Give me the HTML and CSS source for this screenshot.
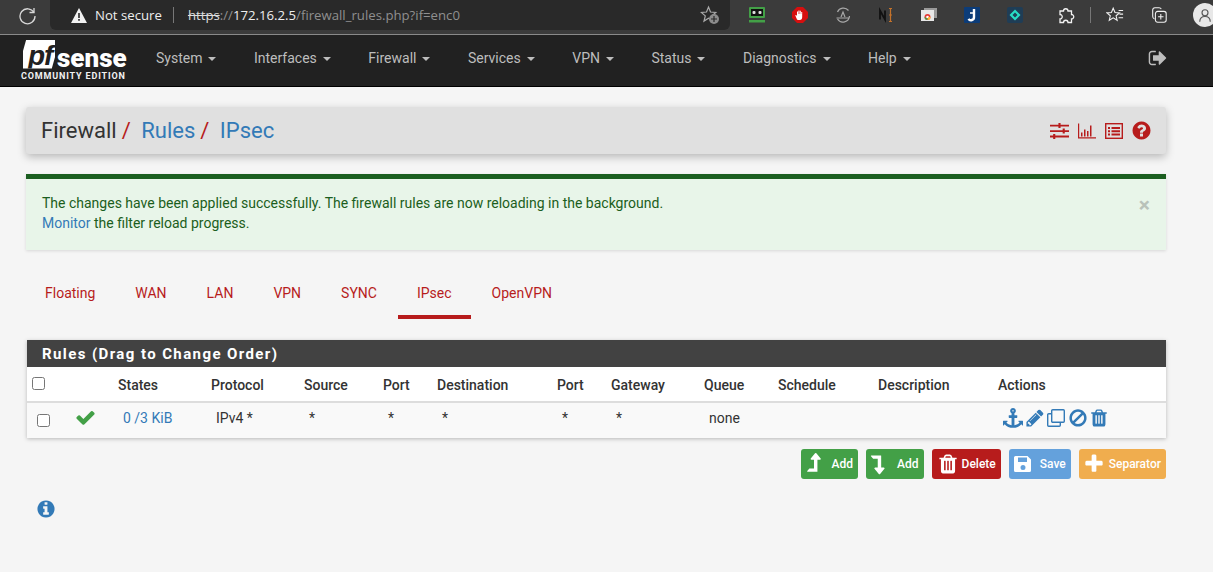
FILE: index.html
```html
<!DOCTYPE html>
<html lang="en">
<head>
    <meta charset="UTF-8">
    <meta name="viewport" content="width=device-width, initial-scale=1.0">
    <title>Firewall: Rules: IPsec</title>
    <link rel="stylesheet" href="styles.css">
</head>
<body>
    <svg class="icon-defs" xmlns="http://www.w3.org/2000/svg">
        <symbol id="i-signout" viewBox="0 0 1792 1792"><path d="M704 1440q0 4 1 20t.5 26.5-3 23.5-10 19.5-20.5 6.5h-320q-119 0-203.5-84.5t-84.5-203.5v-704q0-119 84.5-203.5t203.5-84.5h320q13 0 22.5 9.5t9.5 22.5q0 4 1 20t.5 26.5-3 23.5-10 19.5-20.5 6.5h-320q-66 0-113 47t-47 113v704q0 66 47 113t113 47h312l11.5 1 11.5 3 8 5.5 7 9 2 13.5zm928-544q0 26-19 45l-544 544q-19 19-45 19t-45-19-19-45v-288h-448q-26 0-45-19t-19-45v-384q0-26 19-45t45-19h448v-288q0-26 19-45t45-19 45 19l544 544q19 19 19 45z"/></symbol>
        <symbol id="i-question" viewBox="0 0 1792 1792"><path d="M1024 1376v-192q0-14-9-23t-23-9h-192q-14 0-23 9t-9 23v192q0 14 9 23t23 9h192q14 0 23-9t9-23zm256-672q0-88-55.5-163t-138.5-116-170-41q-243 0-371 213-15 24 8 42l132 100q7 6 19 6 16 0 25-12 53-68 86-92 34-24 86-24 48 0 85.5 26t37.5 59q0 38-20 61t-68 45q-63 28-115.5 86.5t-52.5 125.5v36q0 14 9 23t23 9h192q14 0 23-9t9-23q0-19 21.5-49.5t54.5-49.5q32-18 49-28.5t46-35 44.5-48 28-60.5 12.5-81zm384 192q0 209-103 385.5t-279.5 279.5-385.5 103-385.5-103-279.5-279.5-103-385.5 103-385.5 279.5-279.5 385.5-103 385.5 103 279.5 279.5 103 385.5z"/></symbol>
        <symbol id="i-info" viewBox="0 0 1792 1792"><path d="M1152 1376v-160q0-14-9-23t-23-9h-96v-512q0-14-9-23t-23-9h-320q-14 0-23 9t-9 23v160q0 14 9 23t23 9h96v320h-96q-14 0-23 9t-9 23v160q0 14 9 23t23 9h448q14 0 23-9t9-23zm-128-896v-160q0-14-9-23t-23-9h-192q-14 0-23 9t-9 23v160q0 14 9 23t23 9h192q14 0 23-9t9-23zm640 416q0 209-103 385.5t-279.5 279.5-385.5 103-385.5-103-279.5-279.5-103-385.5 103-385.5 279.5-279.5 385.5-103 385.5 103 279.5 279.5 103 385.5z"/></symbol>
        <symbol id="i-check" viewBox="0 0 1792 1792"><path d="M1671 566q0 40-28 68l-724 724-136 136q-28 28-68 28t-68-28l-136-136-362-362q-28-28-28-68t28-68l136-136q28-28 68-28t68 28l294 295 656-657q28-28 68-28t68 28l136 136q28 28 28 68z"/></symbol>
        <symbol id="i-anchor" viewBox="0 0 1792 1792"><path d="M960 256q0-26-19-45t-45-19-45 19-19 45 19 45 45 19 45-19 19-45zm832 928v352q0 22-20 30-8 2-12 2-12 0-23-9l-93-93q-119 143-318.5 226.5t-429.5 83.5-429.5-83.5-318.5-226.5l-93 93q-9 9-23 9-4 0-12-2-20-8-20-30v-352q0-14 9-23t23-9h352q22 0 30 20 8 19-7 35l-100 100q67 91 189.5 153.5t271.5 82.5v-647h-192q-26 0-45-19t-19-45v-128q0-26 19-45t45-19h192v-163q-58-34-93-92.5t-35-128.5q0-106 75-181t181-75 181 75 75 181q0 70-35 128.5t-93 92.5v163h192q26 0 45 19t19 45v128q0 26-19 45t-45 19h-192v647q149-20 271.5-82.5t189.5-153.5l-100-100q-15-16-7-35 8-20 30-20h352q14 0 23 9t9 23z"/></symbol>
        <symbol id="i-pencil" viewBox="0 0 1792 1792"><path d="M491 1536l91-91-235-235-91 91v107h128v128h107zm523-928q0-22-22-22-10 0-17 7l-542 542q-7 7-7 17 0 22 22 22 10 0 17-7l542-542q7-7 7-17zm-54-192l416 416-832 832h-416v-416zm683 96q0 53-37 90l-166 166-416-416 166-165q36-38 90-38 53 0 91 38l235 234q37 39 37 91z"/></symbol>
        <symbol id="i-ban" viewBox="0 0 1792 1792"><path d="M1440 893q0-161-87-295l-754 753q137 89 297 89 111 0 211.5-43.5t173.5-116.5 116-174.5 43-212.5zm-999 299l755-754q-135-91-300-91-148 0-273 73t-198 199-73 274q0 162 89 299zm1223-299q0 157-61 300t-163.5 246-245 164-298.5 61-298.5-61-245-164-163.5-246-61-300 61-299.5 163.5-245.5 245-164 298.5-61 298.5 61 245 164 163.5 245.5 61 299.5z"/></symbol>
        <symbol id="i-trash" viewBox="0 0 1792 1792"><path d="M704 1376v-704q0-14-9-23t-23-9h-64q-14 0-23 9t-9 23v704q0 14 9 23t23 9h64q14 0 23-9t9-23zm256 0v-704q0-14-9-23t-23-9h-64q-14 0-23 9t-9 23v704q0 14 9 23t23 9h64q14 0 23-9t9-23zm256 0v-704q0-14-9-23t-23-9h-64q-14 0-23 9t-9 23v704q0 14 9 23t23 9h64q14 0 23-9t9-23zm-544-992h448l-48-117q-7-9-17-11h-317q-10 2-17 11zm928 32v64q0 14-9 23t-23 9h-96v948q0 83-47 143.5t-113 60.5h-832q-66 0-113-58.5t-47-141.5v-952h-96q-14 0-23-9t-9-23v-64q0-14 9-23t23-9h309l70-167q15-37 54-63t79-26h320q40 0 79 26t54 63l70 167h309q14 0 23 9t9 23z"/></symbol>
        <symbol id="i-plus" viewBox="0 0 1792 1792"><path d="M1600 736v192q0 40-28 68t-68 28h-416v416q0 40-28 68t-68 28h-192q-40 0-68-28t-28-68v-416h-416q-40 0-68-28t-28-68v-192q0-40 28-68t68-28h416v-416q0-40 28-68t68-28h192q40 0 68 28t28 68v416h416q40 0 68 28t28 68z"/></symbol>
        <symbol id="i-up" viewBox="0 0 1792 1792"><path d="M1402 548q-18 36-58 36h-192v864q0 14-9 23t-23 9h-704q-21 0-29-18-8-20 4-35l160-192q9-11 25-11h320v-640h-192q-40 0-58-37-17-37 9-68l320-384q18-22 49-22t49 22l320 384q27 32 9 69z"/></symbol>
        <symbol id="i-down" viewBox="0 0 1792 1792"><path d="M322 256h704q13 0 22.5 9.5t9.5 23.5v863h192q40 0 58 37t-9 69l-320 384q-18 22-49 22t-49-22l-320-384q-26-31-9-69 18-37 58-37h192v-640h-320q-14 0-25-11l-160-192q-13-14-4-34 9-19 29-19z"/></symbol>
        <symbol id="i-save" viewBox="0 0 18 18"><path fill-rule="evenodd" d="M1.500 1h12l3.500 3.500v11a1.500 1.500 0 0 1-1.500 1.500h-14a1.500 1.500 0 0 1-1.500-1.500v-13a1.500 1.500 0 0 1 1.500-1.500zM4 2.500v4.500h9v-4.500zM9 10a2.500 2.500 0 1 0 0 5 2.500 2.500 0 0 0 0-5z"/></symbol>
    </svg>

    <!-- barra do navegador -->
    <div class="chrome">
        <svg class="reload" viewBox="0 0 20 20" fill="none" stroke="#d8d8d8" stroke-width="1.300"><path d="M16 3v4.500h-4.500"/><path d="M16 7.500a7.500 7.500 0 1 0 1 3.500"/></svg>
        <div class="omnibox">
            <svg class="warn" viewBox="0 0 16 15"><path fill="#f2f2f2" d="M8 0l8 15H0z"/><path fill="#292929" d="M7.200 5h1.600v5H7.200zM7.200 11h1.600v1.800H7.200z"/></svg>
            <span class="not-secure">Not secure</span>
            <span class="omni-sep"></span>
            <span class="url"><s>https</s><span class="dim">://</span>172.16.2.5<span class="dim">/firewall_rules.php?if=enc0</span></span>
            <svg class="fav-add" viewBox="0 0 20 20"><path fill="none" stroke="#aaa" stroke-width="1.200" d="M8.500 2l2 5 5.300.4-4 3.500 1.200 5.200-4.500-2.800-4.500 2.800 1.300-5.200-4-3.500 5.200-.4z"/><circle cx="14" cy="14" r="5" fill="#8c8c8c"/><path stroke="#292929" stroke-width="1.200" d="M14 11v6M11 14h6"/></svg>
        </div>
        <div class="extensions">
            <svg viewBox="0 0 16 16"><rect y="0" width="16" height="11" rx="1" fill="#43a047"/><rect x="2" y="2" width="12" height="7" fill="#111"/><rect x="3.500" y="4" width="3" height="3" rx="1" fill="#ddd"/><rect x="9.500" y="4" width="3" height="3" rx="1" fill="#ddd"/><rect y="13" width="16" height="2.500" fill="#43a047"/></svg>
            <svg viewBox="0 0 16 16"><path fill="#d60f0f" d="M5 0h6l5 5v6l-5 5H5l-5-5V5z"/><path fill="#fff" d="M5 12.500L3.200 8.300l1 -.4L5 9V4.500h1V7h.4V3.500h1V7h.4V3.800h1V7h.4V5h1v5q0 3-2.500 3H7q-1.300 0-2-.5z"/></svg>
            <svg viewBox="0 0 16 16" fill="none" stroke="#a8a8a8" stroke-width="1.200"><path d="M2.500 5a6.500 6.500 0 0 1 11-1.500M14.500 9a6.500 6.500 0 0 1-12 3M1.500 11h13"/><path d="M6 10l2-5 2 5"/></svg>
            <svg viewBox="0 0 16 16" fill="none"><path stroke="#111" stroke-width="1.800" d="M2 12.500V3.500l5 9V3.500"/><path stroke="#c4722a" stroke-width="1.200" d="M11 1.500h3M12.500 1.500v13M11 14.500h3M11 8h3"/></svg>
            <svg viewBox="0 0 16 16"><rect x="3" y="1" width="13" height="10" fill="#9a9a9a"/><rect x="0" y="3" width="13" height="11" fill="#e8e8e8"/><circle cx="6.500" cy="10" r="3" fill="#e53935"/><circle cx="6.500" cy="10" r="1.300" fill="#fff"/><path d="M3.500 10a3 3 0 0 0 3 3v-1.500z" fill="#43a047"/><path d="M6.500 13a3 3 0 0 0 3-3H7.500z" fill="#fbc02d"/></svg>
            <svg viewBox="0 0 16 16"><rect width="16" height="16" rx="1" fill="#0c3c78"/><path fill="none" stroke="#fff" stroke-width="2.400" d="M10 2v8a3 3 0 0 1-5.500 1.800"/><path stroke="#fff" stroke-width="1.500" d="M6 6h4"/></svg>
            <svg viewBox="0 0 16 16"><rect width="16" height="16" rx="2" fill="#1f3d56"/><path fill="#27dcc4" fill-rule="evenodd" d="M8 2.500L13.500 8 8 13.500 2.500 8zM8 5.500L5.500 8 8 10.500 10.500 8z"/></svg>
        </div>
        <svg class="puzzle" viewBox="0 0 18 18"><path fill="none" stroke="#f2f2f2" stroke-width="1.300" d="M3 5h3.500a2.200 2.200 0 1 1 4.500 0h3.500v3.500a2.200 2.200 0 1 1 0 4.500V16.500H11a2.200 2.200 0 1 0-4.500 0H3V13a2.200 2.200 0 1 0 0-4.500z"/></svg>
        <span class="tool-sep"></span>
        <svg class="favs" viewBox="0 0 20 20" fill="none" stroke="#f2f2f2" stroke-width="1.200"><path d="M8 2.500l2 4.700 5 .4-3.800 3.300 1.200 5-4.400-2.700-4.400 2.700 1.200-5L1 7.600l5-.4z"/><path d="M14 5h5M15 9h4M14 13h5"/></svg>
        <svg class="collections" viewBox="0 0 20 20" fill="none" stroke="#f2f2f2" stroke-width="1.200"><path d="M5 14.500q-2 -.5-2-3V4.500q0-2.500 2.500-2.500H10q2 0 2.500 1.500"/><rect x="6" y="6" width="12" height="12" rx="2.500"/><path d="M12 9v6M9 12h6"/></svg>
        <span class="avatar"><svg viewBox="0 0 24 24" fill="none" stroke="#555" stroke-width="1.500"><circle cx="12" cy="9" r="4"/><path d="M5 21c0-6 3-7 7-7s7 1 7 7"/></svg></span>
    </div>

    <!-- menu principal -->
    <nav class="navbar">
        <a class="brand">
            <span class="brand-top"><span class="brand-pf">pf</span><span class="brand-sense">sense</span></span>
            <span class="brand-edition">COMMUNITY EDITION</span>
        </a>
        <ul class="menu">
            <li>System<i class="caret"></i></li>
            <li>Interfaces<i class="caret"></i></li>
            <li>Firewall<i class="caret"></i></li>
            <li>Services<i class="caret"></i></li>
            <li>VPN<i class="caret"></i></li>
            <li>Status<i class="caret"></i></li>
            <li>Diagnostics<i class="caret"></i></li>
            <li>Help<i class="caret"></i></li>
        </ul>
        <svg class="ico logout"><use href="#i-signout"/></svg>
    </nav>

    <main class="content">
        <div class="breadcrumb">
            <h1 class="crumbs">Firewall<span class="slash">/</span><a>Rules</a><span class="slash">/</span><a>IPsec</a></h1>
            <div class="shortcuts">
                <svg class="short sliders" viewBox="0 0 18 16" preserveAspectRatio="none"><path fill="#b71c1c" d="M0 1.800h18v1.800H0zM0 7.200h18V9H0zM0 12.600h18v1.800H0zM8 0h2v5H8zM12 5.500h2v5h-2zM3 11h2v5H3z"/></svg>
                <svg class="short" viewBox="0 0 18 15"><path fill="none" stroke="#b71c1c" stroke-width="1.200" d="M.6 0v14.400H18"/><path fill="#b71c1c" d="M3 9h1.500v4H3zM6 6h1.500v7H6zM9 7.500h1.500V13H9zM12 2h1.500v11H12z"/></svg>
                <svg class="short" viewBox="0 0 18 16"><rect x=".7" y=".7" width="16.600" height="14.600" fill="none" stroke="#b71c1c" stroke-width="1.400"/><path fill="#b71c1c" d="M3 4h2v2H3zM6.500 4H15v2H6.500zM3 7.200h2v2H3zM6.500 7.200H15v2H6.500zM3 10.400h2v2H3zM6.500 10.400H15v2H6.500z"/></svg>
                <svg class="ico help"><use href="#i-question"/></svg>
            </div>
        </div>

        <div class="alert">
            <span class="alert-close">&times;</span>
            The changes have been applied successfully. The firewall rules are now reloading in the background.<br>
            <a>Monitor</a> the filter reload progress.
        </div>

        <ul class="tabs">
            <li>Floating</li>
            <li>WAN</li>
            <li>LAN</li>
            <li>VPN</li>
            <li>SYNC</li>
            <li class="active">IPsec</li>
            <li>OpenVPN</li>
        </ul>

        <section class="panel">
            <h2 class="panel-title">Rules (Drag to Change Order)</h2>
            <table class="rules">
                <thead>
                    <tr>
                        <th class="c-sel"><input type="checkbox"></th>
                        <th class="c-status"></th>
                        <th class="c-states">States</th>
                        <th class="c-proto">Protocol</th>
                        <th class="c-src">Source</th>
                        <th class="c-port">Port</th>
                        <th class="c-dest">Destination</th>
                        <th class="c-port2">Port</th>
                        <th class="c-gw">Gateway</th>
                        <th class="c-queue">Queue</th>
                        <th class="c-sched">Schedule</th>
                        <th class="c-desc">Description</th>
                        <th>Actions</th>
                    </tr>
                </thead>
                <tbody>
                    <tr>
                        <td class="cell-sel"><input type="checkbox"></td>
                        <td><svg class="ico check"><use href="#i-check"/></svg></td>
                        <td><a>0 /3 KiB</a></td>
                        <td>IPv4 *</td>
                        <td>*</td>
                        <td>*</td>
                        <td>*</td>
                        <td>*</td>
                        <td>*</td>
                        <td>none</td>
                        <td></td>
                        <td></td>
                        <td class="actions">
                            <svg class="ico act"><use href="#i-anchor"/></svg>
                            <svg class="ico act"><use href="#i-pencil"/></svg>
                            <svg class="act clone" viewBox="0 0 18 18" fill="none" stroke="#337ab7" stroke-width="1.400"><rect x="4.700" y=".7" width="12.600" height="12.600" rx="1"/><path d="M4.700 4.700H1.700a1 1 0 0 0-1 1v10.600a1 1 0 0 0 1 1h10.600a1 1 0 0 0 1-1v-3"/></svg>
                            <svg class="ico act"><use href="#i-ban"/></svg>
                            <svg class="ico act"><use href="#i-trash"/></svg>
                        </td>
                    </tr>
                </tbody>
            </table>
        </section>

        <div class="buttons">
            <a class="btn btn-green"><svg class="ico arrow"><use href="#i-up"/></svg>Add</a>
            <a class="btn btn-green"><svg class="ico arrow"><use href="#i-down"/></svg>Add</a>
            <a class="btn btn-red"><svg class="ico"><use href="#i-trash"/></svg>Delete</a>
            <a class="btn btn-blue"><svg class="ico save"><use href="#i-save"/></svg>Save</a>
            <a class="btn btn-orange"><svg class="ico plus"><use href="#i-plus"/></svg>Separator</a>
        </div>

        <svg class="ico info"><use href="#i-info"/></svg>
    </main>
</body>
</html>
```

FILE: styles.css
```css
/* Estilo geral */
html, body {
    height: 100%;
}
body {
    font-family: 'Roboto', 'Liberation Sans', sans-serif;
    font-size: 14px;
    margin: 0;
    background-color: #f5f5f5;
    color: #333;
    overflow: hidden;
}
a {
    color: #337ab7;
    text-decoration: none;
}
ul {
    list-style: none;
    margin: 0;
    padding: 0;
}
.icon-defs {
    display: none;
}
.ico {
    width: 18px;
    height: 18px;
    fill: currentColor;
    flex: none;
}

/* Barra do navegador */
.chrome {
    display: flex;
    align-items: center;
    height: 30px;
    padding-bottom: 4px;
    background-color: #3b3b3b;
    border-bottom: 1px solid #8a8a8a;
}
.reload {
    width: 20px;
    height: 20px;
    margin-left: 18px;
    margin-right: 12px;
    flex: none;
}
.omnibox {
    display: flex;
    align-items: center;
    width: 680px;
    height: 30px;
    padding-left: 12px;
    box-sizing: border-box;
    background-color: #292929;
    border-radius: 0 0 6px 6px;
    font-family: 'Open Sans', 'Noto Sans', sans-serif;
    font-size: 13.200px;
    color: #eee;
    white-space: nowrap;
    flex: none;
}
.warn {
    width: 16px;
    height: 15px;
    margin-left: 9px;
    flex: none;
}
.not-secure {
    margin-left: 8px;
}
.omni-sep {
    width: 1px;
    height: 16px;
    margin: 0 14px 0 11px;
    background-color: #777;
}
.url s {
    color: #ddd;
}
.dim {
    color: #8f8f8f;
}
.fav-add {
    width: 20px;
    height: 20px;
    margin-left: auto;
    margin-right: 10px;
}
.extensions {
    display: flex;
    align-items: center;
    gap: 27px;
    margin-left: 19px;
    flex: none;
}
.extensions svg {
    width: 16px;
    height: 16px;
    flex: none;
}
.puzzle {
    width: 18px;
    height: 18px;
    margin-left: 34px;
    flex: none;
}
.tool-sep {
    width: 1px;
    height: 16px;
    margin-left: 15px;
    background-color: #777;
    flex: none;
}
.favs, .collections {
    width: 18px;
    height: 18px;
    flex: none;
}
.favs {
    margin-left: 15px;
}
.collections {
    margin-left: 26px;
}
.avatar {
    display: flex;
    align-items: center;
    justify-content: center;
    width: 24px;
    height: 24px;
    margin-left: 25px;
    border-radius: 50%;
    background-color: #e8e8e8;
    flex: none;
}
.avatar svg {
    width: 18px;
    height: 18px;
}

/* Menu principal */
.navbar {
    display: flex;
    align-items: center;
    height: 45px;
    padding-bottom: 6px;
    background-color: #212121;
    border-bottom: 1px solid #000;
    color: #bdbdbd;
}
.brand {
    display: flex;
    flex-direction: column;
    align-items: flex-start;
    width: 135px;
    margin-left: 21px;
    margin-top: 5px;
    flex: none;
    color: #fff;
}
.brand-top {
    display: flex;
    align-items: flex-end;
    height: 29px;
    margin-left: 2px;
}
.brand-pf {
    display: block;
    width: 32px;
    height: 29px;
    box-sizing: border-box;
    padding-left: 5px;
    background-color: #fff;
    clip-path: polygon(10% 0, 100% 0, 100% 60%, 90% 100%, 0 100%, 0 40%);
    color: #212121;
    font: italic bold 28px/31px 'Liberation Sans', sans-serif;
    letter-spacing: -1px;
}
.brand-sense {
    margin-left: 2px;
    font: 900 26px/22px 'Roboto', sans-serif;
}
.brand-edition {
    margin-top: 2px;
    font: 700 9px/10px 'Roboto', sans-serif;
    letter-spacing: .85px;
    color: #f2f2f2;
    white-space: nowrap;
}
.menu {
    display: flex;
    gap: 37.500px;
}
.menu li {
    white-space: nowrap;
}
.caret {
    display: inline-block;
    margin-left: 6px;
    vertical-align: middle;
    border-top: 4px solid #bdbdbd;
    border-left: 4px solid transparent;
    border-right: 4px solid transparent;
}
.logout {
    width: 20px;
    height: 20px;
    margin-left: auto;
    margin-right: 45px;
}

/* Conteudo */
.content {
    display: flow-root;
    padding: 0 47px 0 26px;
}
.breadcrumb {
    display: flex;
    align-items: center;
    justify-content: space-between;
    height: 47px;
    margin-top: 20px;
    padding: 0 15px;
    background-color: #e0e0e0;
    border-radius: 3px;
    box-shadow: 0 3px 8px rgba(0, 0, 0, 0.25);
}
.crumbs {
    margin: 0;
    font-size: 22px;
    font-weight: 400;
    color: #333;
}
.slash {
    margin: 0 10.500px 0 5px;
    color: #b71c1c;
}
.shortcuts {
    display: flex;
    align-items: center;
    gap: 9px;
}
.short {
    width: 18px;
    height: 16px;
}
.sliders {
    width: 19px;
}
.help {
    width: 21px;
    height: 21px;
    margin: 0 -1px 0 -1px;
    color: #b71c1c;
}
.alert {
    position: relative;
    height: 76px;
    margin-top: 20px;
    padding: 14px 15px 0 16px;
    box-sizing: border-box;
    background-color: #e8f5e9;
    border-top: 5px solid #1b5e20;
    box-shadow: 0 1px 3px rgba(0, 0, 0, 0.12);
    color: #1b5e20;
    line-height: 20px;
}
.alert-close {
    position: absolute;
    top: 16px;
    right: 16px;
    font-size: 21px;
    font-weight: 700;
    color: #b9c2ba;
}
.tabs {
    display: flex;
    margin: 22px 0 0 -1px;
    height: 47px;
}
.tabs li {
    padding: 13px 20px 0;
    color: #b71c1c;
}
.tabs .active {
    margin: 0 1px;
    padding: 13px 19px 0;
    border-bottom: 4px solid #b71c1c;
}
.panel {
    margin: 21px 0 0 1px;
    background-color: #fff;
    box-shadow: 0 1px 4px rgba(0, 0, 0, 0.25);
}
.panel-title {
    margin: 0;
    height: 27px;
    padding-left: 15px;
    background-color: #424242;
    color: #fff;
    font-size: 15px;
    font-weight: 700;
    letter-spacing: 1.400px;
    line-height: 28px;
}
.rules {
    width: 100%;
    table-layout: fixed;
    border-collapse: collapse;
}
.rules th {
    height: 35px;
    padding: 2px 0 0 5px;
    box-sizing: border-box;
    border-bottom: 2px solid #ddd;
    font-size: 14px;
    font-weight: 500;
    text-align: left;
    color: #333;
}
.rules td {
    height: 36px;
    padding: 0 0 6px 10px;
    box-sizing: border-box;
    background-color: #f9f9f9;
    vertical-align: middle;
}
.rules .cell-sel {
    padding-bottom: 3px;
}
.rules input {
    margin: 0;
    vertical-align: middle;
}
.rules th input {
    margin-top: -6px;
}
.c-sel { width: 39px; }
.c-status { width: 47px; }
.c-states { width: 93px; }
.c-proto { width: 93px; }
.c-src { width: 79px; }
.c-port { width: 54px; }
.c-dest { width: 120px; }
.c-port2 { width: 54px; }
.c-gw { width: 93px; }
.c-queue { width: 74px; }
.c-sched { width: 100px; }
.c-desc { width: 120px; }
.check {
    width: 21px;
    height: 21px;
    margin-left: -1px;
    color: #43a047;
    vertical-align: middle;
}
.rules .actions {
    padding-bottom: 5px;
    white-space: nowrap;
    color: #337ab7;
    font-size: 0;
}
.act {
    width: 20px;
    height: 20px;
    margin-right: 1.800px;
    color: #337ab7;
    vertical-align: middle;
}
.clone {
    width: 18px;
    height: 18px;
    margin-right: 3px;
}
.buttons {
    display: flex;
    justify-content: flex-end;
    gap: 8px;
    margin-top: 11px;
}
.btn {
    display: flex;
    align-items: center;
    height: 30px;
    box-sizing: border-box;
    padding: 0 5px;
    border-radius: 3px;
    color: #fff;
    font-size: 12px;
    font-weight: 500;
}
.btn .ico {
    width: 22px;
    height: 22px;
    margin-right: 3px;
}
.btn .arrow {
    width: 24px;
    height: 24px;
    margin-left: -4px;
    margin-right: 6px;
}
.btn .save {
    width: 18px;
    height: 18px;
    margin-right: 8px;
}
.btn .plus {
    margin-left: -1px;
    margin-right: 4px;
}
.btn-green { background-color: #43a047; }
.btn-red { background-color: #b71c1c; }
.btn-blue { background-color: #64a1dc; }
.btn-orange { background-color: #f0ad4e; }
.info {
    display: block;
    width: 20px;
    height: 20px;
    margin: 20px 0 0 10px;
    color: #337ab7;
}
```
